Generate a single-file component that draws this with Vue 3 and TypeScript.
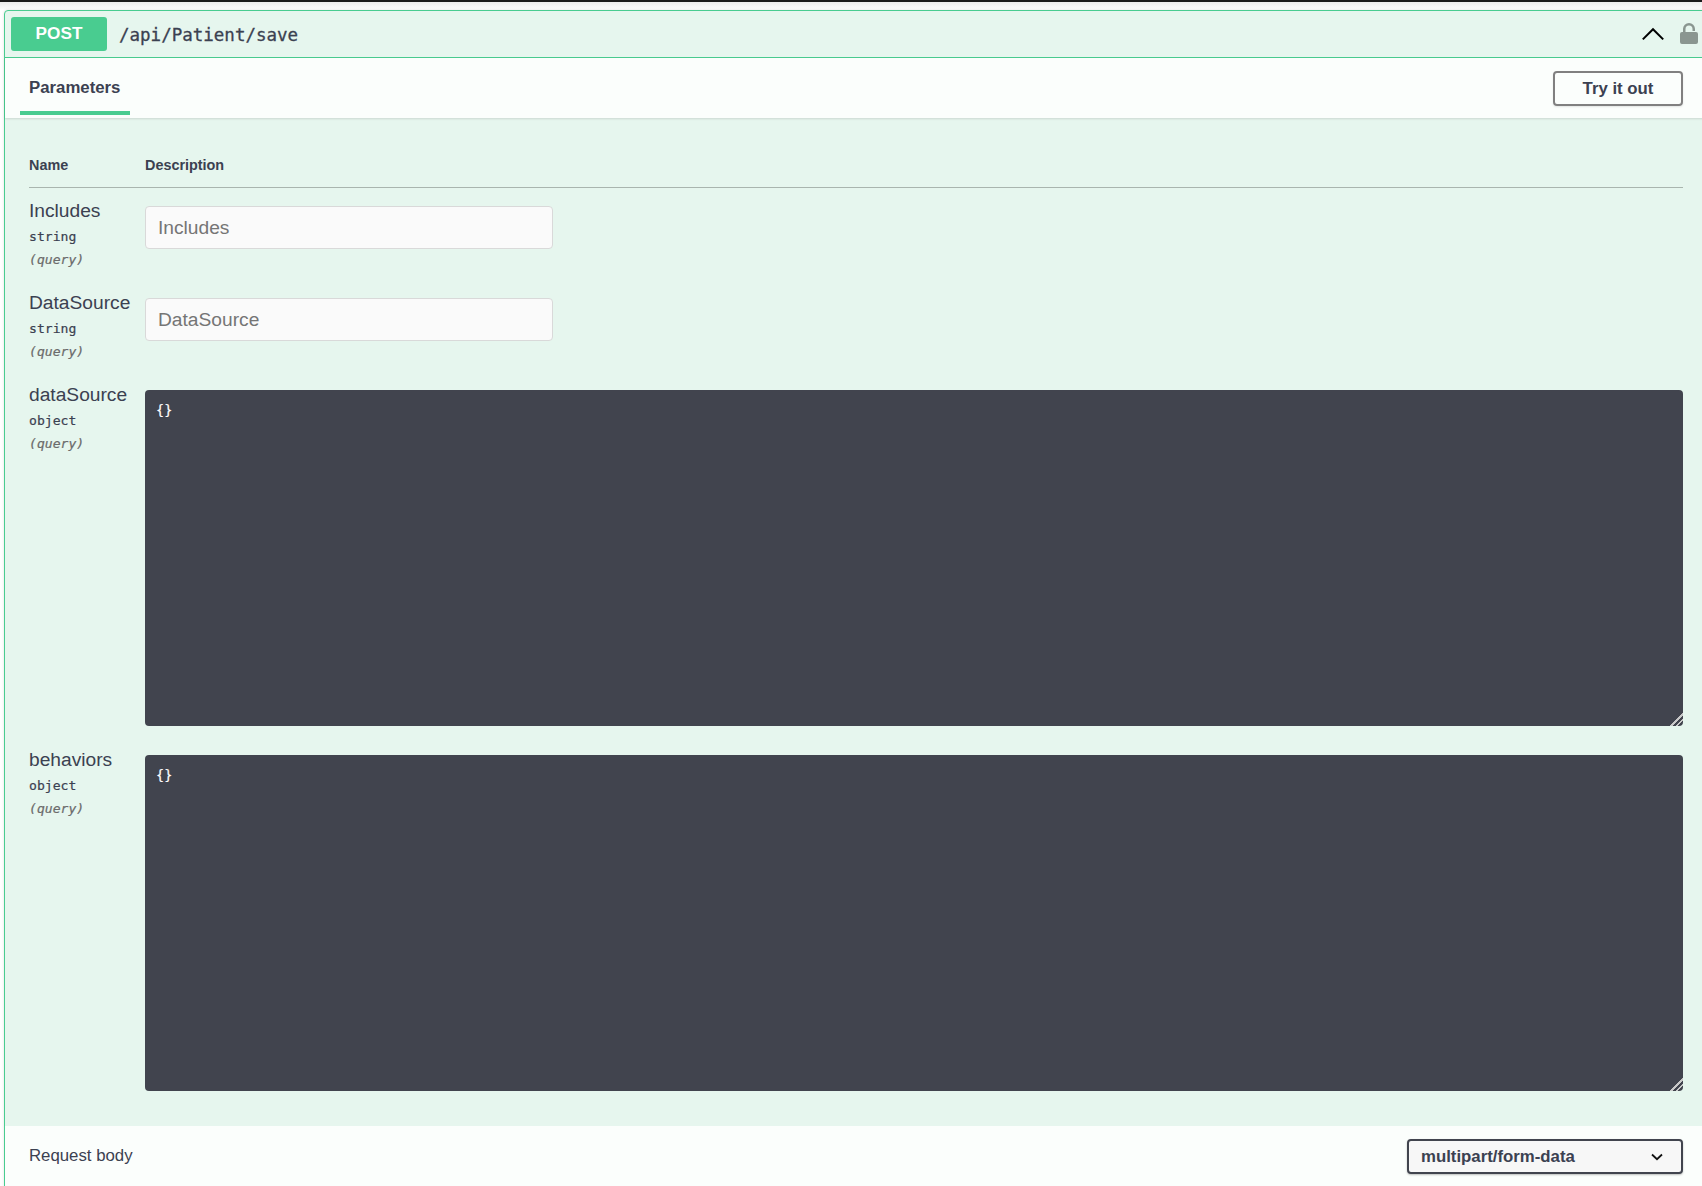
<script setup lang="ts">
interface Param {
  name: string
  type: string
  kind: 'input' | 'body'
}

const params: Param[] = [
  { name: 'Includes', type: 'string', kind: 'input' },
  { name: 'DataSource', type: 'string', kind: 'input' },
  { name: 'dataSource', type: 'object', kind: 'body' },
  { name: 'behaviors', type: 'object', kind: 'body' },
]
</script>

<template>
  <div class="page">
    <div class="opblock">
      <div class="summary">
        <span class="method">POST</span>
        <span class="path">/api/Patient/save</span>
        <svg class="arrow" viewBox="0 0 20 20" width="24" height="24">
          <path d="M1.5 14.5 10 6l8.500 8.500" fill="none" stroke="#000" stroke-width="1.700" />
        </svg>
        <svg class="lock" viewBox="0 0 18 22" width="18" height="22">
          <path
            d="M3 9V6a6 6 0 0 1 12 0v2h-2.500V6a3.500 3.500 0 0 0-7 0v3H16a2 2 0 0 1 2 2v8a2 2 0 0 1-2 2H2a2 2 0 0 1-2-2v-8a2 2 0 0 1 2-2z"
            fill="#8a9690"
          />
        </svg>
      </div>

      <div class="section-head">
        <div class="tab">Parameters</div>
        <button class="try-btn">Try it out</button>
      </div>

      <div class="params">
        <div class="params-head">
          <div class="col-name">Name</div>
          <div>Description</div>
        </div>
        <div v-for="p in params" :key="p.name" class="row" :class="p.kind">
          <div class="col-name">
            <div class="p-name">{{ p.name }}</div>
            <div class="p-type">{{ p.type }}</div>
            <div class="p-in">(query)</div>
          </div>
          <div class="col-desc">
            <input v-if="p.kind === 'input'" class="text-input" :placeholder="p.name" />
            <textarea v-else class="body-input" spellcheck="false">{}</textarea>
          </div>
        </div>
      </div>

      <div class="section-foot">
        <div class="foot-label">Request body</div>
        <div class="select-wrap">
          <select class="select">
            <option>multipart/form-data</option>
          </select>
          <svg class="select-arrow" viewBox="0 0 12 8" width="12" height="8">
            <path d="M1 1.500 6 6.200l5-4.700" fill="none" stroke="#111" stroke-width="1.800" />
          </svg>
        </div>
      </div>
    </div>
  </div>
</template>

<style>
html,
body {
  margin: 0;
  background: #fff;
}
</style>

<style scoped>
.page {
  height: 1186px;
  overflow: hidden;
  box-sizing: border-box;
  border-top: 2px solid #1b1b1b;
  padding: 8px 0 0 4px;
  background: linear-gradient(#ececec, #fff 8px);
  font-family: 'Liberation Sans', Arial, sans-serif;
  color: #3b4151;
}

.opblock {
  margin-right: -4px;
  border: 1.5px solid #49cc90;
  border-radius: 4px 0 0 0;
  background: #e6f6ee;
  box-shadow: 0 0 3px rgba(0, 0, 0, 0.12);
}

.summary {
  display: flex;
  align-items: center;
  height: 46px;
  padding: 0 7px 0 6px;
  border-bottom: 1.5px solid #49cc90;
}

.method {
  width: 96px;
  height: 34px;
  border-radius: 3px;
  background: #49cc90;
  color: #fff;
  font-size: 17.200px;
  font-weight: 700;
  line-height: 32px;
  text-align: center;
}

.path {
  flex: 1;
  margin-top: 2px;
  margin-left: 12px;
  font-family: 'DejaVu Sans Mono', monospace;
  font-size: 17.500px;
  color: #3b4151;
  -webkit-text-stroke: 0.3px #3b4151;
}

.arrow {
  margin-right: 15px;
}

.section-head {
  display: flex;
  align-items: center;
  justify-content: space-between;
  height: 60px;
  padding: 0 22px 0 15px;
  background: #fbfefc;
  box-shadow: 0 1px 2px rgba(0, 0, 0, 0.12);
}

.tab {
  width: 110px;
  box-sizing: border-box;
  height: 56px;
  margin-bottom: 2px;
  padding: 19px 0 0 9px;
  border-bottom: 4px solid #49cc90;
  font-size: 16.800px;
  font-weight: 700;
}

.try-btn {
  width: 130px;
  height: 35px;
  box-sizing: border-box;
  padding: 2px 0 0;
  border: 2px solid #808080;
  border-radius: 4px;
  background: transparent;
  box-shadow: 0 1px 2px rgba(0, 0, 0, 0.1);
  color: #3b4151;
  font-family: inherit;
  font-size: 16.800px;
  font-weight: 700;
}

.params {
  padding: 0 22px 0 24px;
  height: 1008px;
  box-sizing: border-box;
}

.params-head {
  display: flex;
  align-items: flex-end;
  height: 70px;
  padding-bottom: 14px;
  box-sizing: border-box;
  border-bottom: 1px solid #a9b5ae;
  font-size: 14.400px;
  font-weight: 700;
}

.col-name {
  flex: 0 0 116px;
}

.row {
  display: flex;
  height: 92px;
}

.row.body {
  height: 365px;
}

.p-name {
  padding-top: 12px;
  font-size: 19.200px;
  line-height: 21px;
}

.p-type {
  margin-top: 8px;
  font-family: 'DejaVu Sans Mono', monospace;
  font-size: 13.100px;
  line-height: 16px;
  -webkit-text-stroke: 0.2px #3b4151;
}

.p-in {
  margin-top: 7px;
  font-family: 'DejaVu Sans Mono', monospace;
  font-size: 13.100px;
  font-style: italic;
  line-height: 16px;
  color: #6b6b6b;
  -webkit-text-stroke: 0.2px #6b6b6b;
}

.col-desc {
  flex: 1;
  padding-top: 18px;
}

.text-input {
  display: block;
  width: 408px;
  height: 43px;
  box-sizing: border-box;
  padding: 0 12px;
  border: 1px solid #d9d9d9;
  border-radius: 4px;
  background: #fafafa;
  font-family: inherit;
  font-size: 19.200px;
}

.text-input::placeholder {
  color: #757575;
}

.body-input {
  display: block;
  width: 100%;
  height: 336px;
  box-sizing: border-box;
  padding: 10px 11px;
  border: 0;
  border-radius: 4px;
  outline: none;
  background: #41444e;
  color: #fff;
  font-family: 'DejaVu Sans Mono', monospace;
  font-size: 13.500px;
  line-height: 20px;
  resize: vertical;
  -webkit-text-stroke: 0.2px #fff;
}

.body-input::-webkit-resizer {
  background: linear-gradient(
    135deg,
    transparent 55%,
    #c8c8c8 55%,
    #c8c8c8 64%,
    transparent 64%,
    transparent 74%,
    #c8c8c8 74%,
    #c8c8c8 83%,
    transparent 83%
  );
}

.section-foot {
  display: flex;
  align-items: center;
  justify-content: space-between;
  height: 60px;
  padding: 0 22px 0 24px;
  box-sizing: border-box;
  background: #fbfefc;
}

.foot-label {
  font-size: 16.800px;
}

.select-wrap {
  position: relative;
  width: 276px;
  height: 35px;
}

.select {
  width: 100%;
  height: 100%;
  padding: 0 12px;
  border: 2px solid #41444e;
  border-radius: 4px;
  appearance: none;
  background: #f7f7f7;
  box-shadow: 0 1px 2px rgba(0, 0, 0, 0.25);
  color: #3b4151;
  font-family: inherit;
  font-size: 16.800px;
  font-weight: 700;
}

.select-arrow {
  position: absolute;
  top: 14px;
  right: 20px;
}
</style>
